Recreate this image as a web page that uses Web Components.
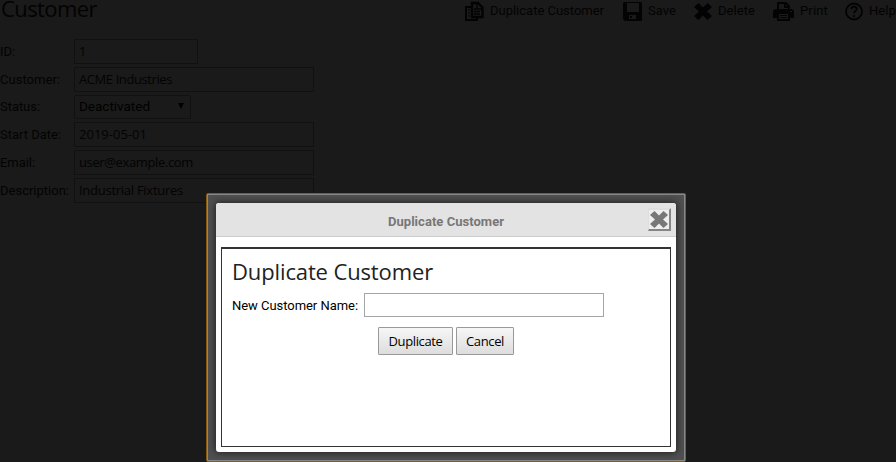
<!DOCTYPE html>
<html lang="en">
<head>
<meta charset="utf-8">
<title>Customer</title>
<style>
html,body{margin:0;width:896px;height:462px;overflow:hidden;background:#1a1a1a}
body{font:13px Roboto,sans-serif;color:#000}
</style>
</head>
<body>
<customer-app></customer-app>
<script>
const define = (name, html, setup) => customElements.define(name, class extends HTMLElement {
  connectedCallback() {
    if (this.shadowRoot) return;
    const t = document.createElement('template');
    t.innerHTML = html;
    this.attachShadow({ mode: 'open' }).append(t.content.cloneNode(true));
    if (setup) setup(this, this.shadowRoot);
  }
});

/* Text set to a fixed advance width by spreading the difference over its letters. */
define('fit-text', `<style>
:host{display:block;white-space:nowrap;overflow:visible}
:host([face=pt]){font-family:"Open Sans","Noto Sans",sans-serif}
span{display:inline-block}
</style><span><slot></slot></span>`, (el, root) => {
  const w = +el.getAttribute('w'), span = root.querySelector('span');
  el.style.width = w + 'px';
  span.style.letterSpacing = (w - span.getBoundingClientRect().width) / el.textContent.length + 'px';
});

const icons = {
  copy: '<path d="M6 5H1v13h11v-2" fill="none" stroke="currentColor" stroke-width="2"/><path d="M3 8h2M3 11h2M3 14h2" stroke="currentColor"/><path d="M7 1h6l4.500 4.500V15H7Z" fill="none" stroke="currentColor" stroke-width="2.400"/><path d="M12 1v6h6M9 7h2M9 9.500h6M9 12h6" fill="none" stroke="currentColor" stroke-width="1.400"/>',
  save: '<path fill-rule="evenodd" fill="currentColor" d="M1 0h17l1 1v18H2l-2-2V1ZM4 1v9h12V1ZM6 13v4h7v-4Z"/><path fill="currentColor" d="M7 14h2v2H7Z"/>',
  cross: '<path fill="currentColor" d="m4.500 1 4.500 4.500L13.500 1 18 5l-5 4.500 5 4.500-4.500 4L9 13.500 4.500 18 0 14l5-4.500L0 5Z"/>',
  print: '<path d="M5 8V1h8l3 3v4M12 1v4h4" fill="none" stroke="currentColor" stroke-width="1.800"/><path fill-rule="evenodd" fill="currentColor" d="M2 7h17l2 2v7h-4v3H4v-3H0V9ZM6 12v5h9v-5ZM17 9v1h2V9Z"/><path d="M7 13.500h7M7 15.500h7" stroke="currentColor"/>',
  help: '<circle cx="9" cy="9.500" r="8" fill="none" stroke="currentColor" stroke-width="1.800"/><path d="M6.300 7.200Q6.700 4.700 9.200 4.700t2.500 2.300c0 1.600-2.600 2-2.600 4.200M9.100 13v2" fill="none" stroke="currentColor" stroke-width="1.800"/>'
};
define('ui-icon', `<style>:host{display:block;height:19px}svg{display:block;overflow:visible}</style>`, (el, root) => {
  const w = el.getAttribute('w');
  root.innerHTML += `<svg width="${w}" height="19" viewBox="0 0 ${w} 19">${icons[el.getAttribute('name')]}</svg>`;
});

define('tool-item', `<style>:host{display:flex;align-items:center;line-height:20px;height:20px}</style><slot></slot>`);

define('form-row', `<style>
:host{display:grid;grid-template-columns:74px 1fr;height:24px;line-height:25px}
:host(.sel){height:23px;line-height:24px}
.box{box-sizing:border-box;height:100%;border:1px solid #111;padding-left:4px;line-height:22px;display:flex;justify-content:space-between;color:#030303}
:host(.sel) .box{line-height:21px;border-radius:1px}
</style><slot name="label"></slot><div class="box"><slot></slot></div>`, (el, root) => {
  root.querySelector('.box').style.width = el.getAttribute('w') + 'px';
});

define('page-form', `<style>
:host{display:block;height:462px;color:#030303}
header{display:flex;justify-content:space-between;height:39px}
h1{margin:0;font-size:22px;font-weight:400;line-height:17px;padding-left:1px}
nav{display:flex;padding-top:1px}
nav ui-icon{margin-right:6px}
main{display:grid;row-gap:4px}
.arrow{width:0;height:0;border:3.500px solid transparent;border-top:6px solid #000;border-bottom:0;margin:7px 6px 0 0}
</style>
<header><h1><fit-text face="pt" w="96">Customer</fit-text></h1>
<nav>
<tool-item><ui-icon name="copy" w="19"></ui-icon><fit-text w="114">Duplicate Customer</fit-text></tool-item>
<tool-item style="margin-left:19px"><ui-icon name="save" w="19"></ui-icon><fit-text w="28">Save</fit-text></tool-item>
<tool-item style="margin-left:18px"><ui-icon name="cross" w="18"></ui-icon><fit-text w="37">Delete</fit-text></tool-item>
<tool-item style="margin-left:18px"><ui-icon name="print" w="21"></ui-icon><fit-text w="28">Print</fit-text></tool-item>
<tool-item style="margin-left:17px"><ui-icon name="help" w="18"></ui-icon><fit-text w="27">Help</fit-text></tool-item>
</nav></header>
<main>
<form-row w="124"><fit-text slot="label" w="15">ID:</fit-text><fit-text face="pt" w="7">1</fit-text></form-row>
<form-row w="240"><fit-text slot="label" w="60">Customer:</fit-text><fit-text face="pt" w="93">ACME Industries</fit-text></form-row>
<form-row w="117" class="sel"><fit-text slot="label" w="40">Status:</fit-text><fit-text w="71" style="font-size:13.500px;color:#000">Deactivated</fit-text><div class="arrow"></div></form-row>
<form-row w="240"><fit-text slot="label" w="61">Start Date:</fit-text><fit-text face="pt" w="68">2019-05-01</fit-text></form-row>
<form-row w="240"><fit-text slot="label" w="35">Email:</fit-text><fit-text face="pt" w="114">user@example.com</fit-text></form-row>
<form-row w="240"><fit-text slot="label" w="69">Description:</fit-text><fit-text face="pt" w="104">Industrial Fixtures</fit-text></form-row>
</main>`);

define('push-button', `<style>
:host{box-sizing:border-box;display:flex;justify-content:center;height:28px;border:1px solid #999;border-radius:1px;background:linear-gradient(#f6f6f6,#ddd);line-height:27px;color:#000}
</style><slot></slot>`);

define('modal-dialog', `<style>
:host{position:absolute;left:206px;top:193px;box-sizing:border-box;width:480px;height:269px;border:1px solid #8b5a0c;border-radius:2px;display:flex}
.frame{flex:1;box-sizing:border-box;border:1px solid #888;padding:8px;background:#505050;display:flex}
.card{flex:1;display:flex;flex-direction:column;background:#fff;border-radius:3px;box-shadow:0 0 7px 1px #222}
header{box-sizing:border-box;height:34px;background:#e3e3e3;border-bottom:1px solid #ccc;border-radius:3px 3px 0 0;display:grid;grid-template-columns:1fr auto 1fr;color:#777;font-weight:700;line-height:38px}
button{box-sizing:border-box;justify-self:end;width:23px;height:23px;margin:5px 5px 0 0;padding:0;border:2px solid;border-width:2px 2px 2px 1px;border-color:#dedede #858585 #858585 #dedede;background:#ededed;color:#777;display:grid;place-items:center}
.body{flex:1;box-sizing:border-box;margin:10px 5px 5px;border:1px solid #333;border-top-width:2px;padding:10px 10px 0;display:block}
</style>
<div class="frame"><div class="card"><header><i></i><fit-text w="116">Duplicate Customer</fit-text>
<button aria-label="Close"><ui-icon name="cross" w="18"></ui-icon></button></header>
<div class="body"><slot></slot></div></div></div>`);

define('customer-app', `<style>
:host{display:block;position:relative;width:896px;height:462px;overflow:hidden}
h2{margin:0;font-size:22px;font-weight:400;line-height:25px;color:#222;height:34px}
.line{display:flex;align-items:center;height:24px}
.input{box-sizing:border-box;width:240px;height:24px;border:1px solid #a5a5a5;margin-left:6px}
.actions{display:flex;gap:3px;margin:10px 0 0 146px}
</style>
<page-form></page-form>
<modal-dialog>
<h2><fit-text face="pt" w="201">Duplicate Customer</fit-text></h2>
<div class="line"><fit-text w="126">New Customer Name:</fit-text><div class="input"></div></div>
<div class="actions"><push-button style="width:75px"><fit-text face="pt" w="54">Duplicate</fit-text></push-button><push-button style="width:58px"><fit-text face="pt" w="38">Cancel</fit-text></push-button></div>
</modal-dialog>`);
</script>
</body>
</html>
